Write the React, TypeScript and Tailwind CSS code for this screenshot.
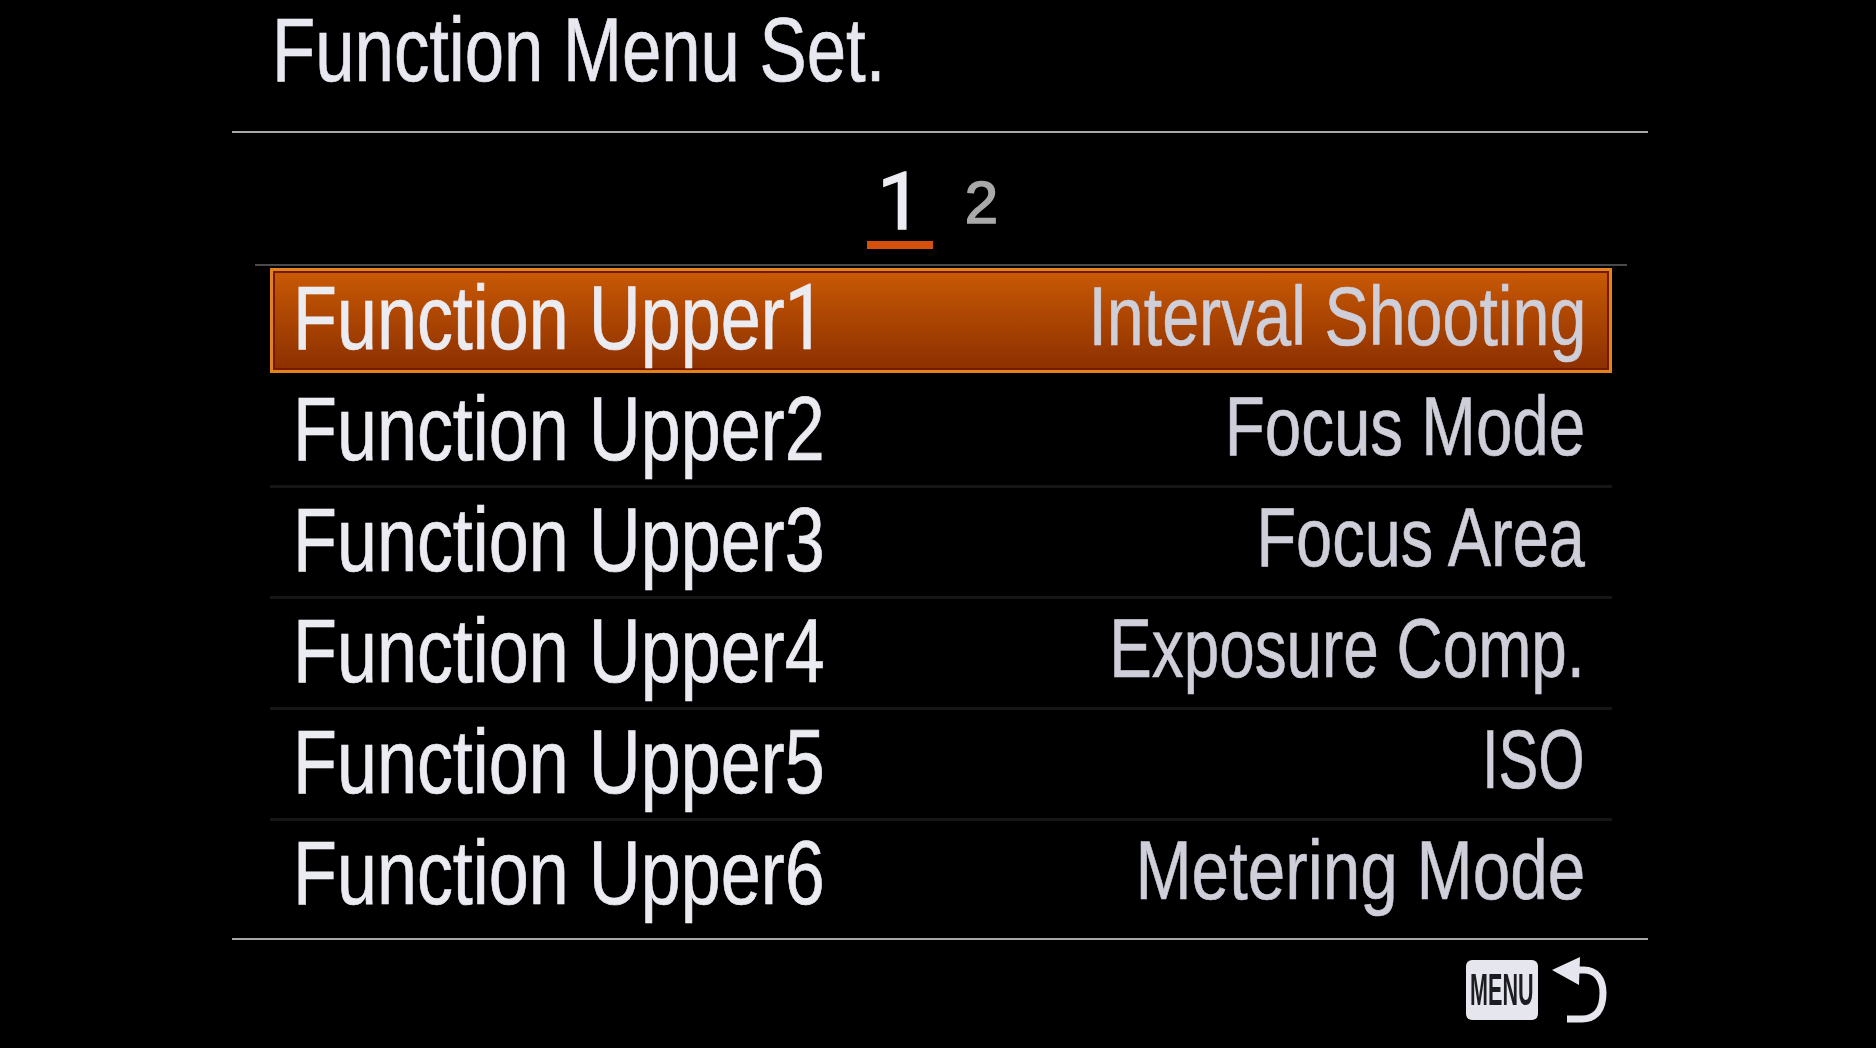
const rows = [
  { left: "Function Upper", digit: "1", right: "Interval Shooting", rs: "scale-x-[0.79]" },
  { left: "Function Upper", digit: "2", right: "Focus Mode", rs: "scale-x-[0.78]" },
  { left: "Function Upper", digit: "3", right: "Focus Area", rs: "scale-x-[0.773]" },
  { left: "Function Upper", digit: "4", right: "Exposure Comp.", rs: "scale-x-[0.76]" },
  { left: "Function Upper", digit: "5", right: "ISO", rs: "scale-x-[0.71]" },
  { left: "Function Upper", digit: "6", right: "Metering Mode", rs: "scale-x-[0.803]" },
];

function Row({ left, digit, right, rs, active }: { left: string; digit: string; right: string; rs: string; active: boolean }) {
  return (
    <div
      className={
        active
          ? "h-[105px] mb-[4px] flex items-center justify-between pl-[20px] pr-[23px] border-[3px] border-[#e2821c] bg-gradient-to-b from-[#c95a06] to-[#8c2f00] shadow-[inset_0_0_0_2px_#741a00]"
          : "h-[111px] flex items-center justify-between pl-[23px] pr-[27px] border-b-[3px] border-[#161616] last:h-[117px] last:pb-[9px] last:border-b-0"
      }
    >
      <span className="min-w-0 flex-1 origin-left scale-x-[0.799] whitespace-nowrap text-[90px] leading-none pb-[4px] text-[#ebebf2] blur-[0.6px] [-webkit-text-stroke:0.7px_#ebebf2]">
        {left}
        <span className={digit === "1" ? "font-['Roboto',sans-serif]" : ""}>{digit}</span>
      </span>
      <span className={`shrink-0 origin-right ${rs} whitespace-nowrap text-[84px] leading-none pb-[10px] text-[#cfcfda] blur-[0.6px] [-webkit-text-stroke:0.6px_#cfcfda]`}>
        {right}
      </span>
    </div>
  );
}

export default function App() {
  return (
    <div className="h-[1048px] w-[1876px] overflow-hidden bg-black font-['Liberation_Sans',sans-serif]">
      <div className="ml-[232px] w-[1416px]">
        <div className="h-[133px] border-b-[2px] border-[#a8a8a8] pl-[40px] pt-[5px]">
          <span className="block origin-left scale-x-[0.786] whitespace-nowrap text-[90px] leading-none text-[#e8e8f0] blur-[0.6px] [-webkit-text-stroke:0.7px_#e8e8f0]">
            Function Menu Set.
          </span>
        </div>
        <div className="ml-[23px] mr-[21px] h-[133px] border-b-[2px] border-[#4a4a4a]">
          <div className="flex justify-center pr-[17px] pt-[33px]">
            <div className="mr-[32px] flex w-[66px] flex-col items-center">
              <span className="font-['Roboto',sans-serif] text-[80px] leading-[72px] text-[#ecECF2] blur-[0.5px] [-webkit-text-stroke:1.5px_#ececf2]">1</span>
              <div className="mt-[3px] h-[8px] w-full bg-[#d4500c]" />
            </div>
            <span className="pt-[7px] text-[60px] leading-[60px] text-[#a9a9a9] blur-[0.5px] [-webkit-text-stroke:1.5px_#a9a9a9]">2</span>
          </div>
        </div>
        <div className="ml-[38px] mr-[36px] mt-[2px]">
          {rows.map((r, i) => (
            <Row key={r.digit} left={r.left} digit={r.digit} right={r.right} rs={r.rs} active={i === 0} />
          ))}
        </div>
        <div className="border-t-[2px] border-[#a8a8a8]">
          <div className="flex justify-end pr-[40px] pt-[20px]">
            <div className="flex h-[60px] w-[72px] items-center justify-center rounded-[6px] bg-[#e6e6ee]">
              <span className="origin-center scale-x-[0.49] text-[44px] font-bold leading-none text-[#1c1c22]">MENU</span>
            </div>
            <svg className="ml-[14px] -mt-[3px]" width="56" height="68" viewBox="0 0 56 68" fill="none">
              <path d="M0 13 L28 0 L27 28 Z" fill="#e6e6ee" />
              <path d="M24 13 H32 C44 13 51 22 51 36 C51 52 44 62 30 62 H15" stroke="#e6e6ee" strokeWidth="7" />
            </svg>
          </div>
        </div>
      </div>
    </div>
  );
}
